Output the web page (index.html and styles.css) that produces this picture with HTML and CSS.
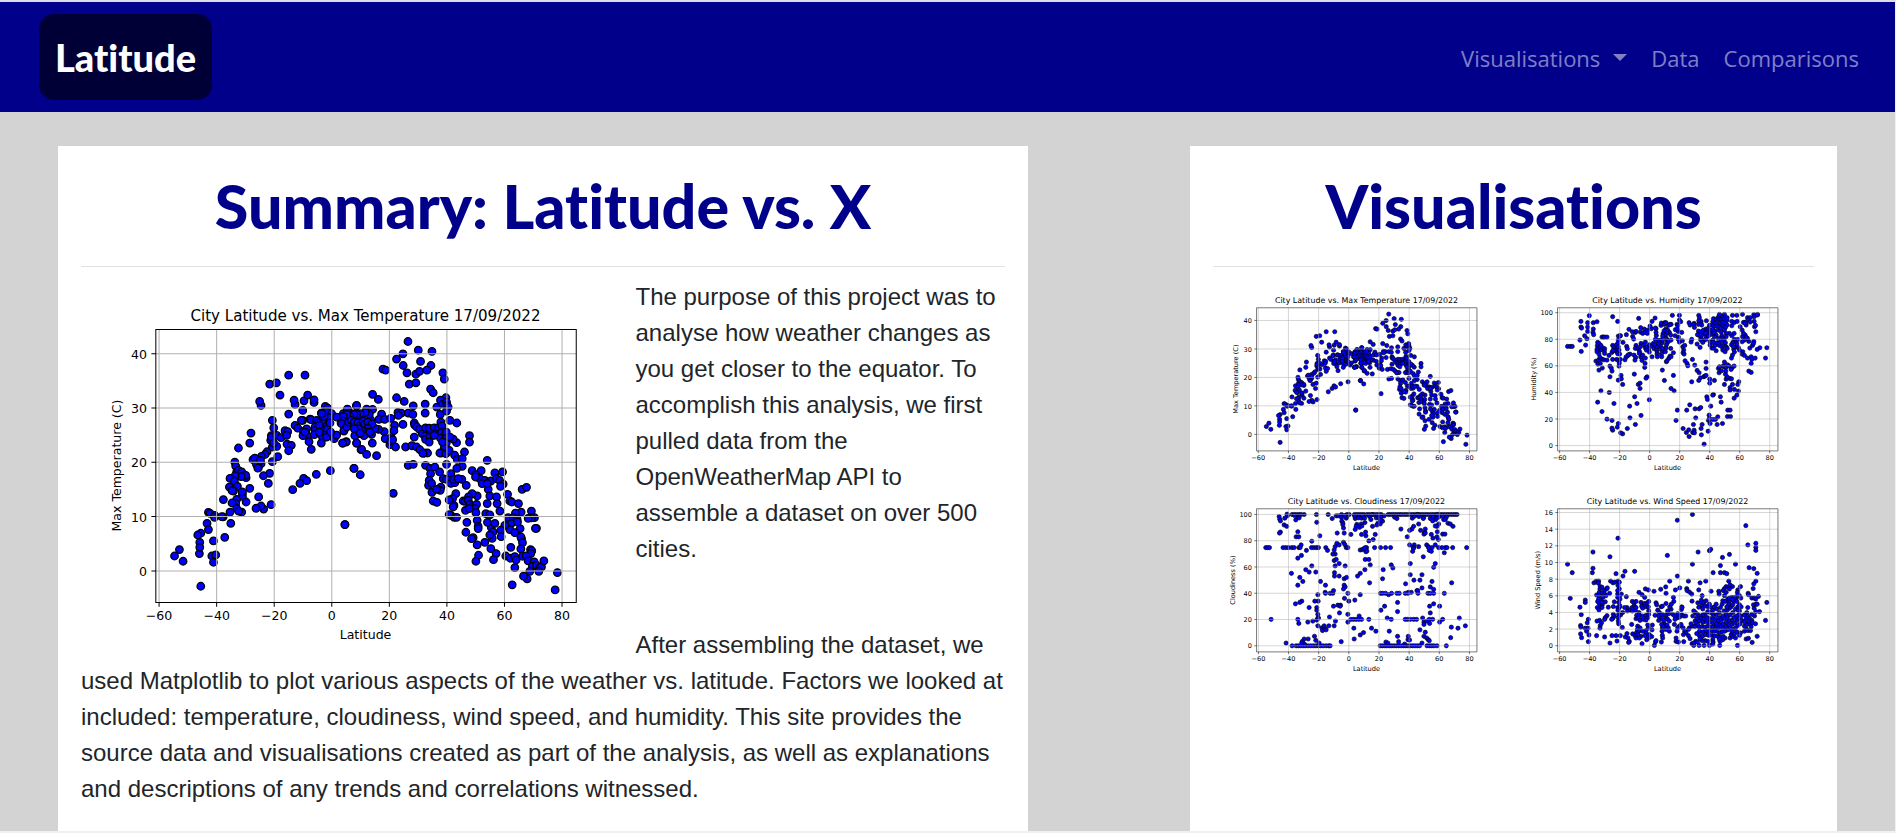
FILE: index.html
```html
<!DOCTYPE html>
<html lang="en">
<head>
<meta charset="utf-8">
<meta name="viewport" content="width=device-width, initial-scale=1">
<title>Latitude</title>
<link rel="stylesheet" href="styles.css">
</head>
<body>
<nav class="navbar">
  <a class="brand" href="#">Latitude</a>
  <ul class="nav-links">
    <li><a class="nav-link dropdown" href="#">Visualisations</a></li>
    <li><a class="nav-link" href="#">Data</a></li>
    <li><a class="nav-link" href="#">Comparisons</a></li>
  </ul>
</nav>
<main class="columns">
  <section class="card">
    <h1>Summary: Latitude vs. X</h1>
    <hr>
    <div class="article">
      <svg class="chart lead" data-chart="temperature" viewBox="0 0 432 288"></svg>
      <p>The purpose of this project was to analyse how weather changes as you get closer to the equator. To accomplish this analysis, we first pulled data from the OpenWeatherMap API to assemble a dataset on over 500 cities.</p>
      <p>After assembling the dataset, we used Matplotlib to plot various aspects of the weather vs. latitude. Factors we looked at included: temperature, cloudiness, wind speed, and humidity. This site provides the source data and visualisations created as part of the analysis, as well as explanations and descriptions of any trends and correlations witnessed.</p>
    </div>
  </section>
  <section class="card">
    <h1>Visualisations</h1>
    <hr>
    <div class="gallery">
      <a href="#"><svg class="chart" data-chart="temperature" viewBox="0 0 432 288"></svg></a>
      <a href="#"><svg class="chart" data-chart="humidity" viewBox="0 0 432 288"></svg></a>
      <a href="#"><svg class="chart" data-chart="cloudiness" viewBox="0 0 432 288"></svg></a>
      <a href="#"><svg class="chart" data-chart="wind" viewBox="0 0 432 288"></svg></a>
    </div>
  </section>
</main>
<script src="charts.js"></script>
</body>
</html>
```
FILE: styles.css
```css
* { box-sizing: border-box; }

body {
  margin: 0;
  min-height: 100vh;
  display: flex;
  flex-direction: column;
  background: lightgray;
  border-top: 2px solid #dcdce4;
  border-right: 1px solid #f0f0f0;
  border-bottom: 2px solid #f0f0f0;
  color: #212529;
  font-family: "Liberation Sans", Arial, sans-serif;
  font-size: 24px;
  line-height: 36px;
}

a { color: inherit; text-decoration: none; }

.navbar {
  display: flex;
  align-items: center;
  justify-content: space-between;
  padding: 12px 24px 12px 39px;
  background: darkblue;
}

.brand {
  padding: 16px;
  border-radius: 15px;
  background: #000037;
  color: #fff;
  font-family: "Gill Sans MT", "Gill Sans", Lato, sans-serif;
  font-size: 38px;
  font-weight: 900;
  font-variant-ligatures: none;
  line-height: 54px;
}

.nav-links {
  display: flex;
  margin: 0;
  padding: 0;
  list-style: none;
}

.nav-link {
  display: block;
  padding: 9px 12px 7px;
  color: rgba(255, 255, 255, .5);
  font-family: "Segoe UI", "Open Sans", sans-serif;
  font-size: 22px;
}

.dropdown::after {
  content: "";
  display: inline-block;
  margin-left: 13px;
  vertical-align: 6px;
  border-top: 7px solid;
  border-right: 7px solid transparent;
  border-left: 7px solid transparent;
}

.columns {
  flex: 1;
  display: grid;
  grid-template-columns: 6fr 4fr;
  column-gap: 162px;
  padding: 34px 58px 0;
}

.card {
  padding: 24px 23px;
  background: #fff;
}

h1 {
  margin: 0;
  color: darkblue;
  font-family: "Gill Sans MT", "Gill Sans", Lato, sans-serif;
  font-size: 61px;
  font-weight: 900;
  font-variant-ligatures: none;
  line-height: 72px;
  text-align: center;
}

hr {
  margin: 24px 0 12px;
  border: 0;
  border-top: 1px solid #e0e0e6;
}

p { margin: 0; }
p + p { margin-top: 60px; }

.chart {
  display: block;
  width: 100%;
  font-family: "DejaVu Sans", sans-serif;
  font-size: 10px;
}

.chart .title { font-size: 12px; }
.chart .grid { stroke: #b0b0b0; stroke-width: .8; fill: none; }
.chart .axis { stroke: #000; stroke-width: .8; fill: none; }
.chart circle { fill: #00f; stroke: #000; stroke-width: 1; r: 3px; }

.lead {
  float: left;
  width: 60%;
  padding: 7px 5px 5px 7px;
}

.gallery {
  display: grid;
  grid-template-columns: 1fr 1fr;
}

.gallery a { padding: 6px 8px 5px; }
.gallery circle { r: 3.2px; }
```
FILE: charts.js
```js
// Scatter charts. Points are digitised positions; sx, sy, ox, oy map them to the 432 x 288 plot.
const charts = {
  temperature: {
    title: "Max Temperature", label: "Max Temperature (C)", labelX: 26,
    x0: 56.6, dx: 45.84, y0: 226.9, dy: 43.25, step: 10, ticks: 5,
    sx: .2652, sy: .2652, ox: -6.2, oy: 3.6,
    points: `626 254 675 254 569 281 589 277 600 314 543 345 539 333 645 342 642 329 672 331 683 314 702 336 702 328 668 360 626 371
577 390 513 428 509 458 475 473 581 412 574 436 572 450 577 470 590 468 574 440 590 435 581 458 603 442 615 421 623 424 620 435 621 461
634 465 626 481 561 484 555 492 593 499 577 514 544 498 543 520 535 532 519 508 524 503 529 522 533 533 541 510 464 515 467 527 470 545
475 540 485 545 498 562 497 555 483 559 465 556 450 564 463 572 448 590 472 588 460 602 456 601 487 608 487 618 486 605 509 594 498 635
470 627 467 640 456 638 470 655 485 665 476 662 450 665 430 628 452 699 385 666 390 669 404 675 403 681 429 680 425 679 381 699 385 718
400 752 434 741 362 729 353 734 359 756 358 790 359 771 298 778 283 797 309 813 395 797 407 794 400 816 362 888 569 549 550 556 565 579
536 620 573 643 551 656 543 647 528 654 638 598 671 564 660 579 680 571 709 552 751 541 822 534 795 703
668 390 645 405 653 413 664 390 673 433 670 423 680 415 683 437 669 436 687 454 694 477 675 425 690 386 694 388 710 390 715 398 705 410
705 420 703 433 720 430 722 416 732 398 718 405 724 368 736 348 743 353 740 365 755 370 748 382 732 378 725 370 742 405 742 416 735 435
728 443 724 458 740 440 718 425 750 398 770 380 763 445 770 434 752 425 788 458 799 454 792 422 783 398 795 385 790 370 803 358 803 372
806 391 815 370 829 346 829 370 820 385 823 395 822 410 829 420 825 435 830 458 829 392 840 405 845 378 843 478 835 430 842 425 826 435
${shift(780, `204 153 189 190 235 179 276 183 170 206 190 225 242 213 273 225 129 236 137 239 201 247 228 251 239 243 261 239 309 247 313 266
208 281 228 277 272 296 280 307 98 312 115 327 170 322 193 333 220 346 256 341 256 368 318 322 302 329 291 350 301 372 309 341 320 335
321 345 325 350 320 362 50 345 22 356 80 356 98 357 125 371 117 387 134 387 152 384 174 366 184 368 175 375 205 368 219 372 189 402 164 405
162 421 133 424 116 417 105 414 92 388 88 372 76 366 60 370 50 372 42 372 30 378 20 372 10 378 8 392 5 400 12 420 20 410 26 395 34 390 43 395
54 398 62 405 70 392 74 402 84 395 96 401 84 414 75 424 72 436 65 420 55 415 43 415 45 436 61 428 95 432 90 425 97 458 50 458 18 455 8 458
65 477 80 492 110 496 136 445 150 463 154 442 152 453 158 448 167 470 197 470 216 466 223 440 223 398 224 404 230 409 239 417 230 470 240 478
254 488 263 488 249 489 247 430 257 412 269 420 268 413 283 412 256 437 257 447 270 440 268 455 284 430 297 411 303 395 306 406 305 427 302 443
315 446 319 425 320 445 319 458 313 472 305 488 300 488 318 490 328 480 330 390 351 398 350 457 340 446 389 436 389 455 374 485 344 494 352 507
367 505 367 528 351 534 442 510 205 525 220 522 257 525 270 534 285 530 320 522 333 550 299 545 272 550 268 570 266 585 275 579 276 606 280 632
291 636 303 590 301 600 290 597 310 565 320 567 333 579 345 577 341 567 348 610 338 625 328 629 342 645 340 650 366 567 379 585 397 541 424 541
408 553 420 565 407 560 435 570 427 580 445 575 453 572 465 548 470 565 479 570 488 545 490 581 482 588 445 597 450 617 470 620 472 640 442 640
412 617 397 610 386 620 370 632 376 633 385 630 390 642 396 650 410 642 405 655 377 660 388 655 408 667 412 690 415 708 438 670 450 674 480 662
503 612 510 632 516 635 536 640 547 597 560 591 544 665 527 668 505 682 520 682 532 687 514 700 510 718 495 705 483 720 484 739 454 711 465 699
443 696 460 725 457 744 450 734 435 756 412 764 400 742 395 745 378 726 381 696 415 715 333 675 343 681 350 681 328 673 575 662 584 682 575 683
565 684 590 714 587 714 541 715 525 727 533 695 545 745 543 740 548 757 543 776 572 778 576 782 573 790 513 771 453 775 469 790 461 808 416 795
408 813 498 797 512 804 525 799 529 809 525 832 548 798 559 797 565 812 583 815 578 828 590 825 600 832 605 830 612 812 597 843 570 843 562 866
551 858 517 884 653 847 646 899 160 609 42 534 61 553 15 703 442 580 355 565 330 440 308 455 283 435`)}`
  },
  humidity: {
    title: "Humidity", label: "Humidity (%)", labelX: 21,
    x0: 57.1, dx: 45.6, y0: 243.9, dy: 40.36, step: 20, ticks: 6,
    sx: .507, sy: .507, ox: -34.7, oy: -7.6,
    points: `270 107 340 110 355 124 245 124 265 128 282 128 293 125 245 141 247 144 265 141 282 147 265 154 281 157 283 164 256 167 263 176
242 180 259 195 246 214 205 199 213 199 219 199 418 115 467 114 458 124 519 106 540 106 540 120 544 125 389 148 381 164 363 167 399 155
408 157 410 154 424 143 435 147 423 156 430 160 437 157 445 150 444 160 400 169 403 177 371 187 357 168 357 180 355 190 363 167 295 187 299 190
308 171 312 171 316 171 323 171 294 197 297 204 303 200 304 210 293 208 305 196 293 215 299 222 290 243 298 240 302 232 311 204 316 206 315 213
316 220 308 237 314 239 323 240 296 252 303 250 309 264 299 270 329 226 332 258 336 264 338 273 332 290 340 196 344 202 350 196 351 210 353 215
357 200 359 210 338 217 345 211 355 221 361 222 340 238 352 238 358 242 363 238 360 249 359 258 341 211 382 199 384 206 392 222 385 227 380 231
377 239 365 286 357 300 366 296 370 313 405 282 387 224 404 225 409 232 407 240 410 196 408 205 418 208 421 215 425 190 423 200 420 220 424 231
430 225 428 241 438 234 437 250 436 262 438 186 434 195 438 204 443 200 450 194 448 208 450 216 441 210 456 146 452 138 458 230 457 198 462 190
466 193 466 203 464 206 473 214 472 206 473 222 474 230 480 195 475 200 483 197 486 208 490 215 486 222 477 190 489 188 484 180 474 180 468 178
471 166 470 157 470 146 468 144 485 136 486 129 496 128 495 133 500 128 507 136 515 133 512 133 499 147 494 152 491 161 505 150 510 157 514 165
502 160 497 166 490 168 501 175 503 180 504 188 508 183 515 180 490 180 527 167 537 171 528 149 536 154 547 157 540 186 549 182 537 178 533 133
534 147 535 137 522 218 512 228 508 235 501 245 503 242 487 230 515 230 501 195 500 204 498 215 489 205 514 205 550 200 556 196 553 210 551 218 554 222
569 128 572 135 584 130 583 133 585 142 577 178 575 186 557 242 563 250 565 257 579 238 586 255 598 106 600 113 605 124 604 130 598 122 597 133
607 135 621 122 597 153 605 155 612 150 620 147 598 165 604 173 594 164 612 161 620 171 593 192 602 202 604 180 615 180 610 187 606 166 620 246 620 265
593 271 599 278 603 293 598 301 577 305 613 290 616 288 620 286 631 297 631 309 645 301 522 286 495 301 489 270 443 290 440 294 417 313 422 309 422 325
515 325 524 332 450 359 406 350 413 370 391 378 425 406 392 413 408 433 384 445 370 461 364 458 354 441 340 450 338 444 357 430 323 417 338 421
344 370 330 337 305 332 295 366 308 394 530 421 534 390 562 390 571 374 587 386 599 386 604 382 589 413 551 445 561 457 568 449 569 469 580 457
584 450 585 458 582 433 605 445 608 433 606 464 614 492 626 453 627 421 629 405 630 415 640 418 648 418 655 410 632 430 653 433 669 430 684 409
693 409 685 390 692 390 634 378 665 366 622 350 624 358 642 343 640 345 663 350 704 354 712 345 692 322 692 330 705 328 717 333 699 313 718 305
715 313 675 313 691 295 696 296 680 297 683 290 678 282 659 278 657 265 660 260 666 272 671 258 675 246 674 260 679 262 684 254 689 258 698 262
704 258 695 268 679 273 696 234 699 225 705 216 703 208 710 200 717 203 720 210 730 215 728 222 735 226 744 234 755 230 757 238 767 234 755 250
748 273 755 277 781 203 773 208 802 203 798 234 751 204 759 196 763 184 762 190 748 184 744 175 735 180 728 185 729 170 737 165 740 172 732 160
728 150 722 140 769 155 765 140 768 136 774 103 763 104 764 110 774 105 729 103 744 113 752 113 764 124 732 127 738 126 746 120 752 126 740 135
737 130 699 106 712 106 697 124 705 127 713 124 697 137 704 160 697 167 705 178 700 187 710 186 712 192 715 178 696 194 702 200 690 160 680 160
675 103 677 113 665 108 657 111 660 103 642 116 650 117 658 120 667 118 674 118 683 121 683 113 640 125 647 130 655 126 662 130 670 127 678 130
683 135 638 135 643 140 652 138 660 141 670 138 678 142 630 136 626 146 632 150 640 149 647 153 656 150 665 156 675 150 630 160 635 163 643 160
650 165 667 167 670 174 674 180 680 170 622 157 618 160 627 168 619 178 632 185 640 180 632 195 637 204 642 204 647 196 652 188 660 196 667 200
673 195 678 188 680 200 670 210 677 215 660 190 666 183 650 212 640 187 683 205 645 170 657 175 664 145`
  },
  cloudiness: {
    title: "Cloudiness", label: "Cloudiness (%)", labelX: 21,
    x0: 56.8, dx: 45.8, y0: 242.7, dy: 39.9, step: 20, ticks: 6,
    sx: .507, sy: .514, ox: -31.9, oy: -10.7,
    points: `237 111 239 119 241 124 254 116 262 109 261 104 252 136 260 140 241 157 238 160 276 105 283 105 290 105 297 105 303 105 312 105
287 121 293 113 297 115 283 108 349 105 350 128 384 105 396 117 359 168 335 184 293 156 288 171 296 171 408 109 414 109 424 105 424 114 425 125
428 130 428 135 430 145 432 160 411 160 440 105 438 116 440 112 447 105 434 108 463 105 470 105 477 105 484 105 491 105 500 105 507 105 516 105
522 105 530 105 537 105 543 105 465 117 463 109 475 115 484 116 487 109 493 116 508 111 512 120 515 105 528 115 536 115 543 113 552 109 547 125
540 133 533 131 540 121 530 136 517 140 494 129 483 133 470 134 468 140 465 149 478 143 485 139 452 164 484 164 496 157 497 168 525 164 519 179
506 183 564 105 570 105 577 105 583 105 590 105 597 105 603 105 610 105 617 105 624 105 631 105 638 105 645 105 652 105 659 105 666 105 673 105
680 105 687 105 694 105 701 105 708 105 715 105 722 105 729 105 736 105 743 105 750 105 757 105 764 105 770 105 583 113 590 117 636 116 643 110
652 105 656 111 670 114 669 117 655 133 640 140 635 148 628 152 621 171 602 148 661 152 675 148 673 158 671 163 675 160 693 164 690 117 697 124
699 113 706 120 710 115 711 105 715 133 710 140 705 139 711 156 710 171 698 175 714 179 716 112 727 110 730 120 738 113 735 120 743 131 750 133
758 140 727 163 734 163 628 195 642 195 639 202 655 200 679 195 684 200 687 211 693 214 705 195 669 230 732 218 735 203 740 203 757 203 799 203
685 203 695 203 715 203 725 203 640 205 637 214 197 203 203 203 208 203 249 203 257 203 265 203 275 203 282 203 296 203 303 195 300 203 319 211
334 203 341 203 349 203 355 203 377 203 382 211 304 226 293 234 335 257 317 268 327 275 347 275 274 279 299 291 308 303 293 314 361 303 376 314
410 190 417 195 430 187 434 194 438 203 443 203 405 200 402 210 405 222 398 222 402 241 408 238 417 250 405 257 435 257 403 277 403 287 417 287
432 295 439 291 432 314 435 319 430 325 480 210 486 209 491 206 499 203 495 203 497 215 500 213 495 238 506 238 510 254 494 268 480 279 472 287
508 307 523 203 541 203 556 203 571 203 549 268 573 254 578 263 547 295 630 250 705 250 700 261 630 283 665 283 641 299 659 299 616 310 695 303
754 307 690 319 665 322 700 326 650 330 652 330 624 335 633 335 541 338 547 338 556 338 565 342 574 338 590 338 597 338 615 338 623 338 653 338
683 338 690 338 700 338 732 338 353 342 375 335 376 338 390 338 398 338 400 330 443 338 480 342 464 358 433 353 446 361 344 361 354 361 305 361
299 365 286 369 327 380 350 380 350 388 353 400 353 411 350 417 355 411 388 408 400 376 413 373 421 373 420 376 418 396 443 400 406 420 443 423
213 415 293 415 296 427 323 423 338 420 353 434 365 440 372 434 375 442 386 434 402 434 367 448 378 446 452 415 460 415 468 415 476 415 484 415
477 405 506 415 542 388 553 376 592 365 592 392 561 411 573 415 615 415 622 415 630 415 640 415 649 415 667 411 671 423 671 430 680 420 687 415
688 427 697 415 727 415 718 423 690 396 688 376 700 369 718 376 777 411 795 434 773 441 753 438 751 469 514 441 527 450 461 441 490 454 480 461
462 473 423 481 567 450 659 446 675 453 671 465 679 470 684 475 687 478 665 485 624 465 623 475 628 476 592 465 595 481 613 488 343 465 347 477
324 473 312 473 307 480 305 484 313 488 258 485 276 493 288 493 295 493 302 493 309 493 316 493 324 493 332 493 340 493 348 493 355 493 362 493
369 493 378 493 386 493 390 493 357 485 540 493 547 493 554 493 560 493 567 493 574 493 581 493 588 493 595 493 602 493 609 493 616 493 623 493
630 493 637 493 644 493 651 493 658 493 680 493 687 493 694 493 701 493 710 493 738 493 557 482 563 485`
  },
  wind: {
    title: "Wind Speed", label: "Wind Speed (m/s)", labelX: 27,
    x0: 57.1, dx: 45.6, y0: 242.7, dy: 25.3, step: 2, ticks: 9,
    sx: .507, sy: .514, ox: -34.7, oy: -10.7,
    points: `356 175 281 216 332 230 205 252 219 277 281 264 279 277 377 273 406 273 350 280 371 287 534 122 579 105 739 138 745 195 769 190
769 202 769 211 504 226 596 216 630 212 634 208 690 223 669 232 708 252 579 252 663 256 641 277 663 277 675 277 682 280 534 287 749 262 763 265
773 279 213 353 258 358 242 379 258 365 246 401 244 433 245 438 244 458 247 469 258 441 262 450 266 441 267 415 264 425 269 461 267 481
511 302 567 302 602 307 619 302 688 302 769 302 761 324 763 310 723 318 715 328 714 335 699 318 692 313 680 318 690 325 675 324 671 330 680 335
499 319 484 326 500 338 438 325 447 328 464 332 419 335 428 342 436 350 528 328 541 322 562 324 563 330 570 334 577 340 598 328 578 361 608 345
522 350 523 362 635 332 658 332 659 340 675 345 746 338 747 342 777 347 802 365 780 392 798 418 773 465 758 483 740 473 747 471
284 307 291 302 298 302 297 308 303 318 302 325 308 320 315 330 322 325 324 322 292 343 300 335 300 345 308 338 316 340 320 345 331 338 311 350
298 355 306 360 300 368 294 380 302 378 309 372 308 380 318 363 299 387 308 365 295 362 334 302 341 307 347 305 356 302 360 305 356 315 360 325
355 330 355 340 361 345 355 350 362 355 358 365 345 363 342 377 327 379 355 380 360 380 356 388 362 375 366 340 381 348 370 395 364 402 358 400
342 400 345 406 340 412 337 415 323 404 318 410 316 415 293 420 301 418 307 425 303 433 302 441 357 410 357 420 358 428 369 439 292 463 316 467
332 485 338 463 350 463 353 479 363 463 383 380 376 380 384 390 392 388 399 390 398 380 405 375 408 388 399 362 404 366 410 362 410 380 419 395
425 365 427 376 435 368 442 367 448 362 440 378 447 378 448 390 430 382 412 403 420 402 410 413 418 410 422 418 430 405 432 415 440 403 445 410
440 417 448 400 397 430 415 435 422 440 414 445 419 450 378 467 383 457 386 470 390 480 388 483 400 458 407 463 410 470 411 455 416 460 425 465
420 470 430 450 440 448 447 440 445 432 440 457 450 460 448 470 437 463 442 475 428 487 458 446 459 432 457 466 465 492 468 482 470 478 467 403
470 366 472 372 485 378 489 376 475 388 480 395 478 405 488 400 485 412 478 418 490 410 493 420 496 430 500 402 502 412 508 398 505 390 515 385
511 378 516 370 500 368 505 415 510 420 520 400 526 405 535 398 535 410 541 408 547 402 553 405 559 405 547 378 546 386 548 380 487 430 489 440
488 450 489 462 490 470 486 482 492 437 503 432 507 440 510 450 500 445 525 430 527 415 533 450 540 435 535 440 545 430 551 440 556 450 560 455
552 460 530 470 530 480 537 482 553 481 567 463 572 472 570 440 580 435 575 428 587 420 578 487 580 405 588 395 583 390 594 400 592 411 567 445
583 492 599 492 614 492 630 492 661 492 714 492 595 366 605 366 606 358 613 365 608 376 598 379 610 384 620 360 618 375 626 378 630 370 636 380
640 388 645 378 650 370 652 384 660 395 663 380 668 370 670 360 678 362 685 355 690 362 697 350 688 370 695 378 704 362 710 352 712 362 700 372
690 382 683 388 674 390 680 400 670 405 660 410 650 402 640 400 632 395 625 392 617 400 610 402 602 405 605 412 614 413 624 410 632 413 640 412
648 415 657 420 666 416 675 412 684 410 692 402 700 395 708 385 715 378 720 390 718 402 710 405 703 410 696 418 688 420 680 424 670 428 660 430
650 428 640 425 630 424 620 422 610 424 600 420 590 425 595 432 587 436 600 438 608 436 617 438 625 435 634 438 642 437 650 440 658 440 665 438
673 440 680 436 688 432 698 430 706 425 712 418 718 412 725 405 727 418 722 428 715 433 708 440 700 445 692 440 684 446 676 450 667 452 660 455
651 450 643 450 635 448 626 450 618 448 609 452 600 450 592 457 600 463 609 465 618 460 627 462 636 462 645 464 654 465 662 468 671 465 677 470
670 475 662 480 640 475 641 482 640 488 625 480 617 478 608 478 602 472 589 480 583 485 594 482 660 474 692 470 695 460 700 465 705 458 712 452
723 455 720 462 708 470 697 450 735 450 740 442 735 435 742 430 735 422 740 412 735 402 742 395 745 405 750 412 757 418 748 422 752 430 759 425
768 428 755 437 745 448 753 448 765 405 757 400 745 380 764 382 769 392 762 372 770 370 757 352 764 352 773 370 769 355 720 345 715 342 724 352
705 350 698 356 690 352 682 378 720 372 725 378 716 388`
  }
};

function shift(dx, list) {
  return list.trim().split(/\s+/).map((v, i) => i % 2 ? v : Number(v) + dx).join(" ");
}

const box = { left: 54, right: 388.8, top: 34.6, bottom: 252 };

function draw(svg) {
  const c = charts[svg.dataset.chart];
  const n = c.points.trim().split(/\s+/).map(Number);
  let dots = "", grid = "", marks = "", text = "";
  for (let i = 0; i < n.length; i += 2) {
    dots += `<circle cx="${(n[i] * c.sx + c.ox).toFixed(1)}" cy="${(n[i + 1] * c.sy + c.oy).toFixed(1)}" r="3"/>`;
  }
  for (let i = 0; i < 8; i++) {
    const x = c.x0 + i * c.dx;
    grid += `M${x} ${box.top}V${box.bottom}`;
    marks += `M${x} ${box.bottom}v3.5`;
    text += `<text x="${x}" y="266" text-anchor="middle">${String(i * 20 - 60).replace("-", "−")}</text>`;
  }
  for (let i = 0; i < c.ticks; i++) {
    const y = c.y0 - i * c.dy;
    grid += `M${box.left} ${y}H${box.right}`;
    marks += `M${box.left} ${y}h-3.5`;
    text += `<text x="47" y="${y + 4}" text-anchor="end">${i * c.step}</text>`;
  }
  svg.innerHTML = `${dots}<path class="grid" d="${grid}"/>
    <path class="axis" d="${marks}M${box.left} ${box.top}H${box.right}V${box.bottom}H${box.left}Z"/>${text}
    <text x="221" y="281" text-anchor="middle">Latitude</text>
    <text transform="translate(${c.labelX} 143) rotate(-90)" text-anchor="middle">${c.label}</text>
    <text class="title" x="221" y="28" text-anchor="middle">City Latitude vs. ${c.title} 17/09/2022</text>`;
}

document.querySelectorAll(".chart").forEach(draw);
```
